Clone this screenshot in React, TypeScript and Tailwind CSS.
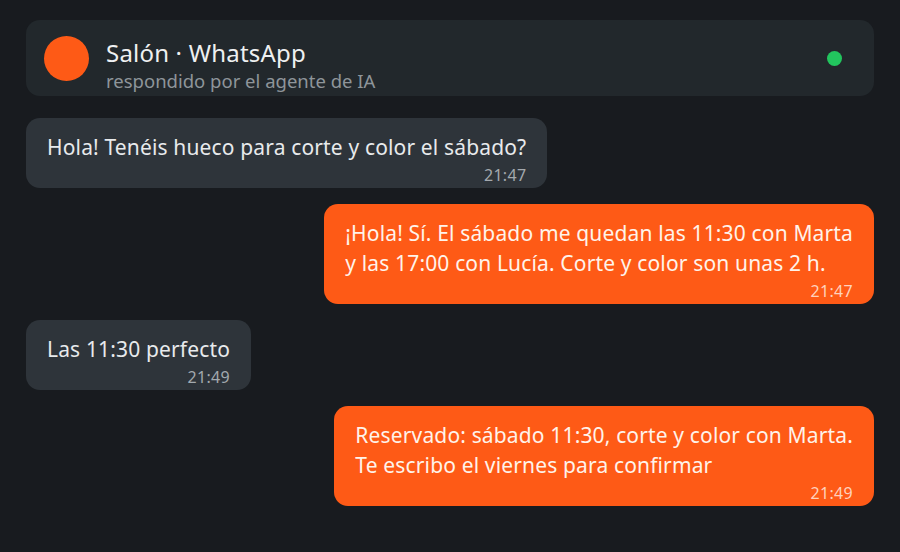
const messages = [
  { id: 1, from: 'client', lines: ['Hola! Tenéis hueco para corte y color el sábado?'], time: '21:47' },
  {
    id: 2,
    from: 'agent',
    lines: ['¡Hola! Sí. El sábado me quedan las 11:30 con Marta', 'y las 17:00 con Lucía. Corte y color son unas 2 h.'],
    time: '21:47',
  },
  { id: 3, from: 'client', lines: ['Las 11:30 perfecto'], time: '21:49' },
  {
    id: 4,
    from: 'agent',
    lines: ['Reservado: sábado 11:30, corte y color con Marta.', 'Te escribo el viernes para confirmar'],
    time: '21:49',
  },
]

function Bubble({ from, lines, time }: { from: string; lines: string[]; time: string }) {
  const agent = from === 'agent'
  return (
    <div className={agent ? 'flex justify-end' : 'flex justify-start'}>
      <div
        className={
          agent
            ? 'rounded-[14px] bg-[#fe5a16] pl-[21px] pr-[21px] pt-[14px] pb-[4px] text-[#fff3ea]'
            : 'rounded-[14px] bg-[#2e343a] pl-[21px] pr-[21px] pt-[14px] pb-[4px] text-[#e8eaec]'
        }
      >
        <div className="text-[21px] leading-[30px] tracking-[0.15px] whitespace-nowrap">
          {lines.map((l) => (
            <div key={l}>{l}</div>
          ))}
        </div>
        <div
          className={
            agent
              ? 'text-right text-[16px] leading-[18px] tracking-[0.3px] mt-[4px] text-[#ffd2bd]'
              : 'text-right text-[16px] leading-[18px] tracking-[0.3px] mt-[4px] text-[#a3a9ae]'
          }
        >
          {time}
        </div>
      </div>
    </div>
  )
}

export default function App() {
  return (
    <div
      className="w-[900px] h-[552px] bg-[#181b1f] px-[26px] pt-[20px] overflow-hidden"
      style={{ fontFamily: '"Noto Sans", "Open Sans", sans-serif' }}
    >
      <div className="flex items-center rounded-[14px] bg-[#22282c] h-[76px] pl-[18px] pr-[32px]">
        <div className="w-[45px] h-[45px] rounded-full bg-[#fe5a16] shrink-0" />
        <div className="ml-[17px] flex-1 pt-[16px]">
          <div className="text-[24px] leading-[28px] tracking-[0.2px] text-[#eef0f1]">Salón · WhatsApp</div>
          <div className="mt-[2px] text-[18.5px] leading-[24px] text-[#8e959a]">respondido por el agente de IA</div>
        </div>
        <div className="w-[15px] h-[15px] rounded-full bg-[#22c55e]" />
      </div>
      <div className="mt-[22px] flex flex-col gap-[16px]">
        {messages.map((m) => (
          <Bubble key={m.id} from={m.from} lines={m.lines} time={m.time} />
        ))}
      </div>
    </div>
  )
}
